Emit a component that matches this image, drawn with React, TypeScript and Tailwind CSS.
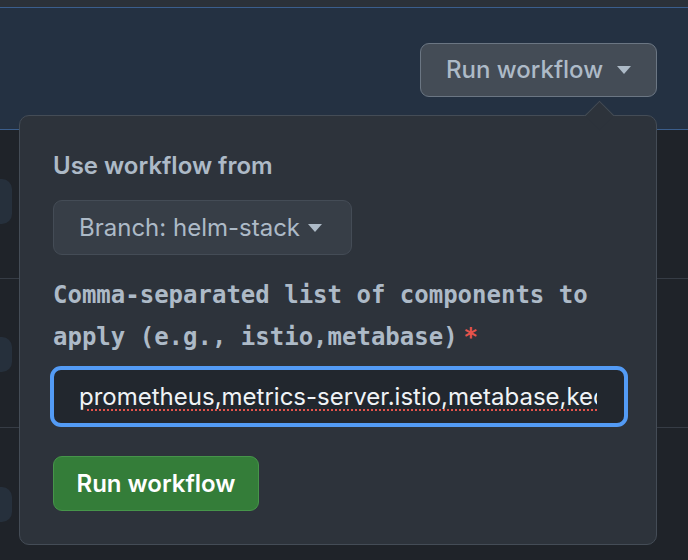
// App.tsx
const sans = { fontFamily: 'Inter, "Noto Sans", sans-serif' };
const mono = { fontFamily: '"DejaVu Sans Mono", "Liberation Mono", monospace' };

function Caret({ className }: { className?: string }) {
  return (
    <svg width="14" height="8" viewBox="0 0 14 8" className={className}>
      <path d="M0 0h14L7 8z" fill="currentColor" />
    </svg>
  );
}

export default function App() {
  return (
    <div className="relative w-[688px] h-[560px] overflow-hidden bg-[#1f2329]" style={sans}>
      <div className="h-[7px] bg-[#2b3139] border-b border-[#3b5e8c] box-content" />
      <div className="h-[122px] bg-[#243142] border-b border-[#3b5e8c] flex justify-end items-start pr-[31px] pt-[35px]">
        <button className="h-[54px] w-[237px] rounded-[9px] bg-[#444c56] border border-[#6b7683] flex items-center pl-[25px] gap-[14px] text-[#adbac7] text-[24px] font-medium">
          Run workflow
          <Caret />
        </button>
      </div>
      <div>
        <div className="h-[149px] border-b border-[#363c45] flex items-start pt-[49px]">
          <div className="w-[12px] h-[45px] rounded-r-[10px] bg-[#26303c]" />
        </div>
        <div className="h-[149px] border-b border-[#363c45] flex items-start pt-[58px]">
          <div className="w-[12px] h-[35px] rounded-r-[10px] bg-[#26303c]" />
        </div>
        <div className="h-[131px] flex items-start pt-[59px]">
          <div className="w-[12px] h-[35px] rounded-r-[10px] bg-[#26303c]" />
        </div>
      </div>

      {/* popover */}
      <div className="absolute left-[19px] top-[115px] w-[638px] h-[430px] rounded-[10px] bg-[#2d333b] border border-[#444c56] px-[33px] pt-[35px]">
        <div className="absolute right-[46px] -top-[11px] w-[21px] h-[21px] rotate-45 bg-[#2d333b] border-l border-t border-[#444c56]" />
        <div className="relative">
          <div className="text-[24px] leading-[30px] font-semibold text-[#adbac7]">Use workflow from</div>
          <button className="mt-[19px] h-[55px] w-[299px] rounded-[9px] bg-[#373e47] border border-[#444c56] flex items-center pl-[25px] gap-[8px] text-[#adbac7] text-[24px]">
            Branch: helm-stack
            <Caret />
          </button>
          <div className="mt-[19px] text-[24px] leading-[42px] font-bold text-[#adbac7]" style={mono}>
            Comma-separated list of components to
            <br />
            apply (e.g., istio,metabase)<span className="ml-[6px] text-[#e5534b]">*</span>
          </div>
          <div className="mt-[8px] -ml-[3px] w-[578px] h-[61px] rounded-[11px] border-[4px] border-[#539bf5] bg-[#22272e] pl-[25px] pr-[27px] flex items-center">
            <div className="w-full overflow-hidden whitespace-nowrap text-[24px] leading-[32px] text-[#f0f3f6]">
              <span className="underline decoration-dotted decoration-[#e5534b] decoration-2 underline-offset-[5px]">
                prometheus,metrics-server.istio,metabase,keda
              </span>
            </div>
          </div>
          <button className="mt-[29px] h-[55px] w-[206px] rounded-[9px] bg-[#347d39] border border-[#46954a] text-white text-[24px] font-semibold">
            Run workflow
          </button>
        </div>
      </div>
    </div>
  );
}
